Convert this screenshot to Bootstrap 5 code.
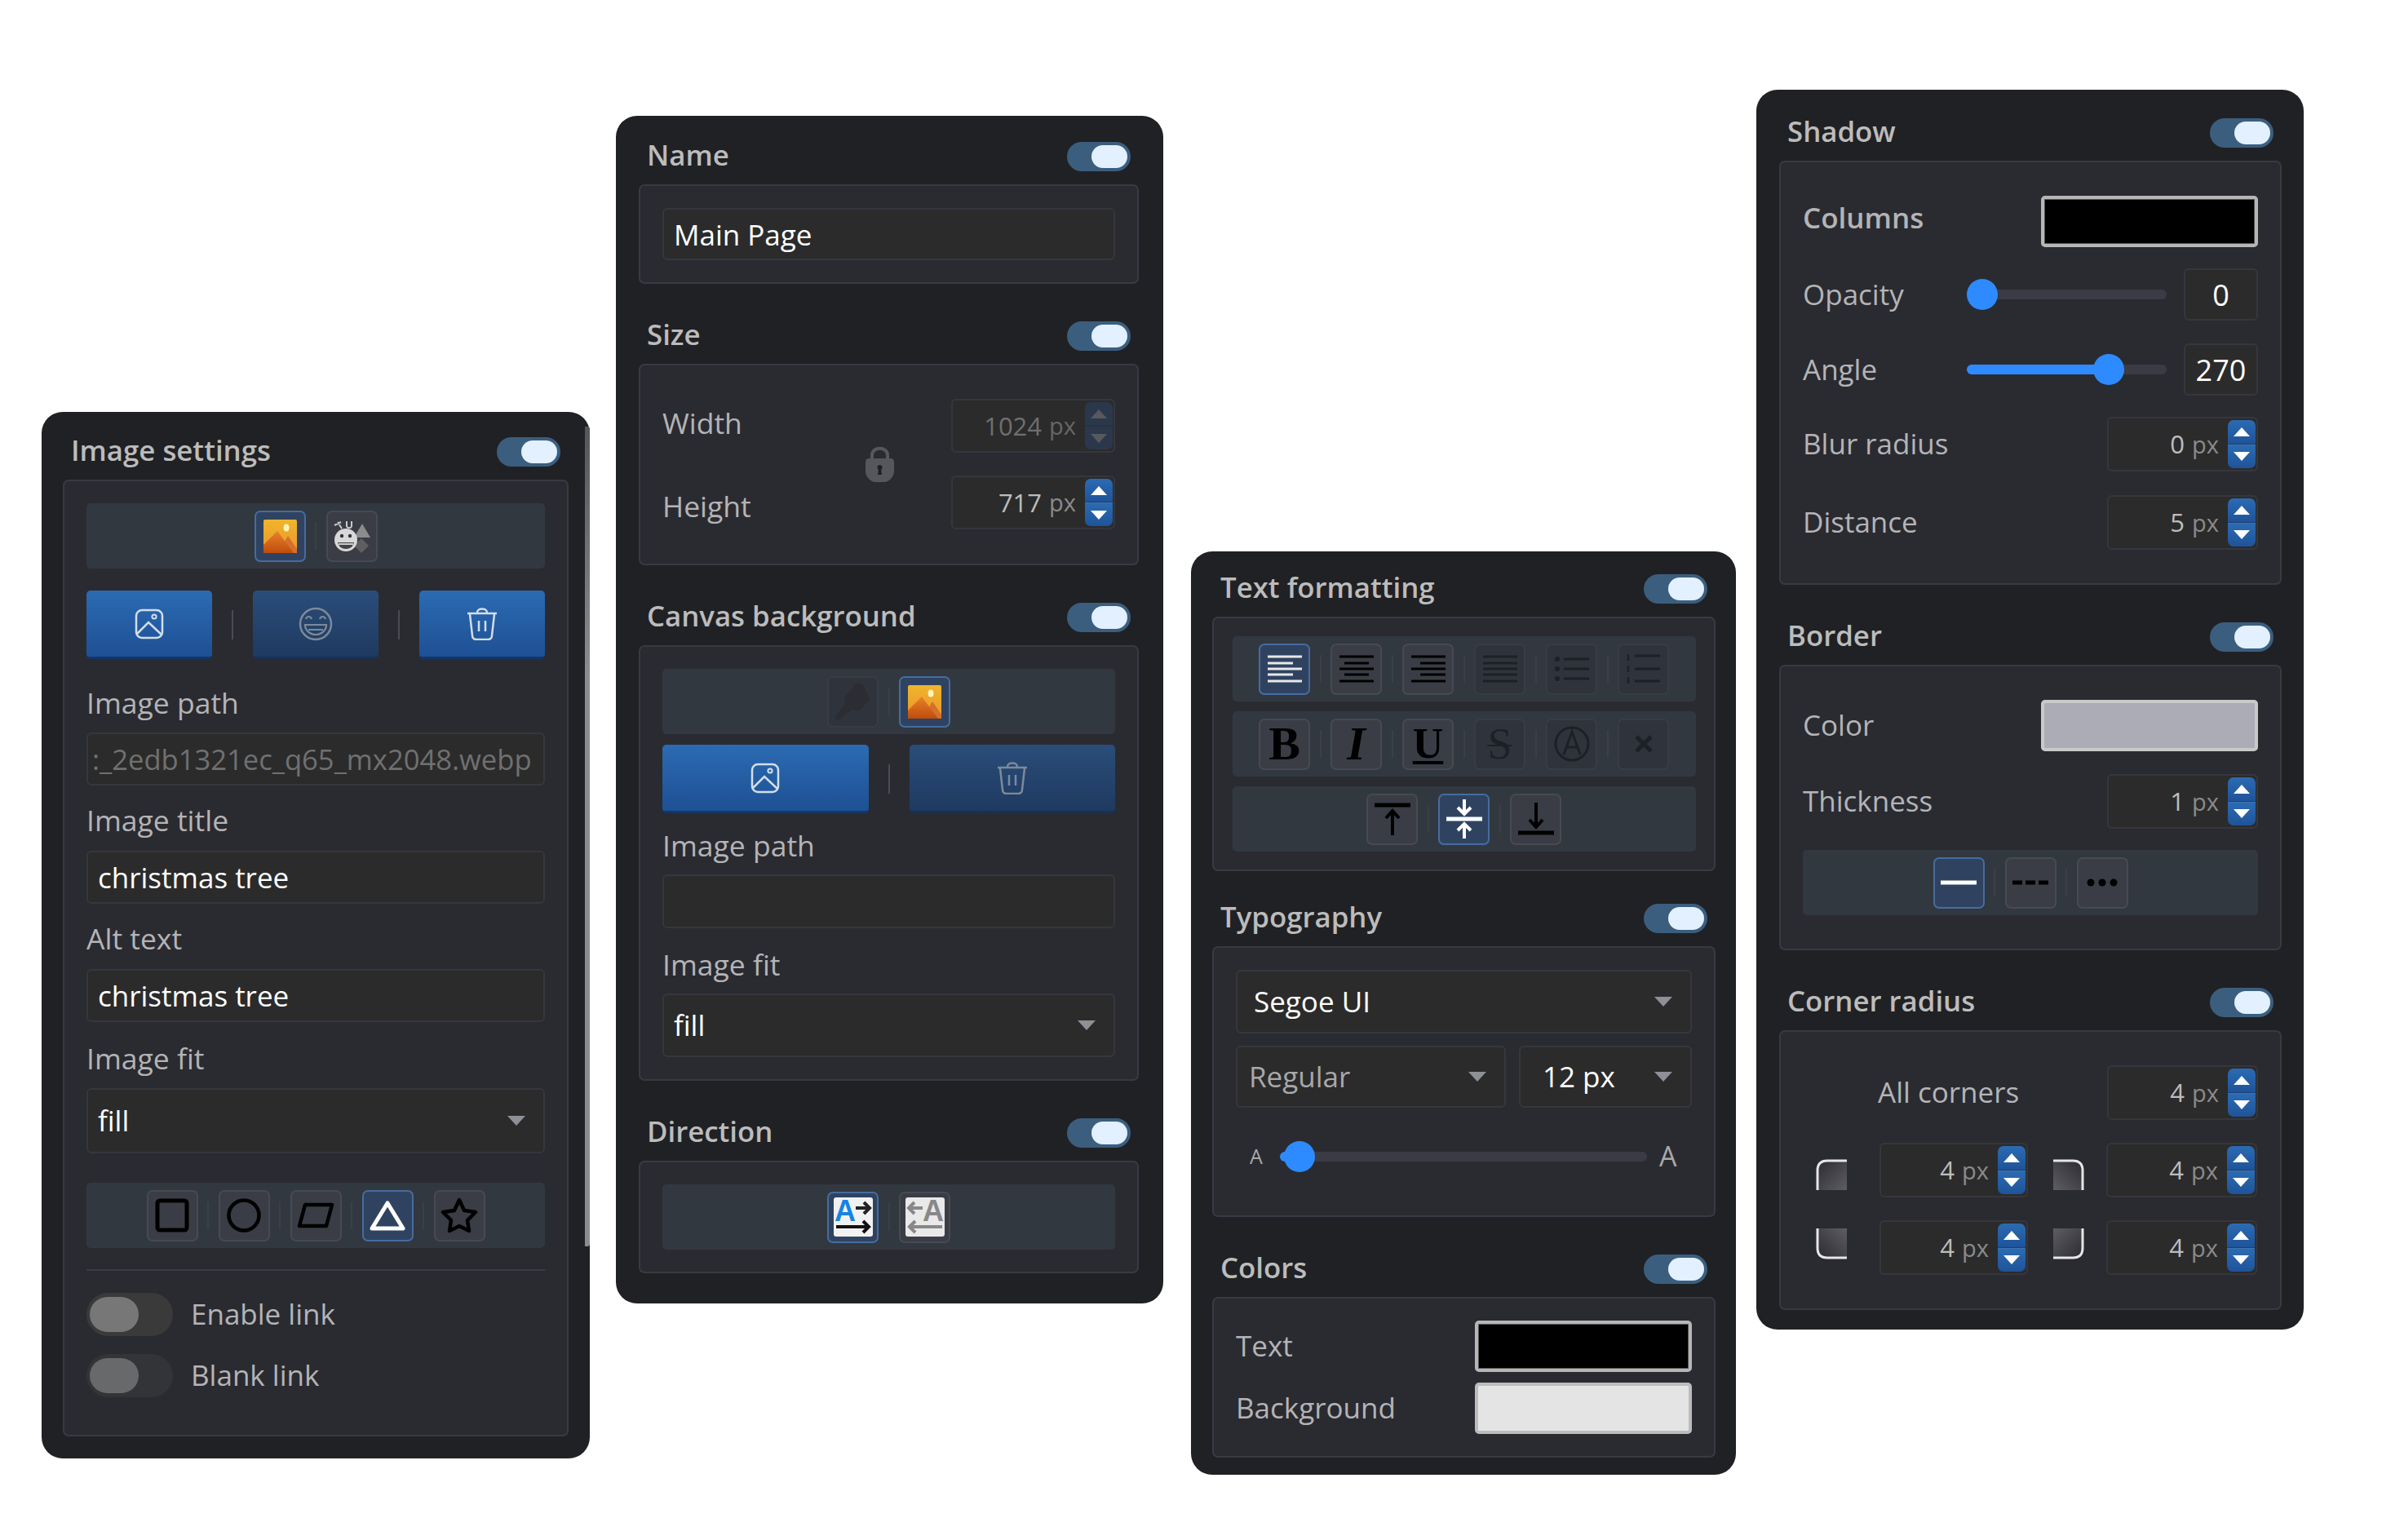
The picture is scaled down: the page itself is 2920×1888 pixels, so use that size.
<!DOCTYPE html>
<html lang="en">
<head>
    <meta charset="UTF-8">
    <title>Settings panels</title>
    <link href="https://cdn.jsdelivr.net/npm/bootstrap@5.3.0/dist/css/bootstrap.min.css" rel="stylesheet">
    <style>
        body { background: #fff; font-family: "Open Sans", "Liberation Sans", sans-serif; font-size: 35px; color: #b4b4b6; }
        .sprite { display: block; width: 0; height: 0; overflow: hidden; }
        .canvas { width: 2920px; height: 1888px; overflow: hidden; align-items: flex-start; }

        /* panels */
        .panel { background: #202124; border-radius: 26px; position: relative; flex: none; }
        .p1 { width: 672px; height: 1283px; margin: 505px 0 0 51px; padding: 31px 26px 0; }
        .p2 { width: 671px; height: 1456px; margin: 142px 0 0 32px; padding: 32px 30px 0 28px; }
        .p3 { width: 668px; height: 1132px; margin: 676px 0 0 34px; padding: 28px 25px 0 26px; }
        .p4 { width: 671px; height: 1520px; margin: 110px 0 0 25px; padding: 35px 27px 0 28px; }
        .scroll-thumb { position: absolute; top: 18px; right: 0; width: 6px; height: 1005px; border-radius: 0 3px 3px 0; background: linear-gradient(#55565a, #8b8c8f 30%, #8b8c8f); }

        .head { height: 36px; margin-bottom: 16px; padding: 0 10px; font-size: 34.8px; font-weight: 600; color: #bcbcbc; line-height: 36px; }
        .head > span:first-child { margin-top: -5px; }
        .box { background: #2a2b31; border: 2px solid #383a43; border-radius: 7px; padding: 27px; }
        .box-fmt { padding: 22px 22.5px; }
        .box-tall { padding-top: 41px; padding-bottom: 41px; }
        .sec { margin-top: 46px; }
        .sec-tight { margin-top: 40px; }
        .sep-line { border: 0; border-top: 2px solid #3a3c44; opacity: 1; margin-bottom: 0; }

        /* toggles */
        .toggle { width: 78px; height: 36px; border-radius: 18px; background: #3b5e7e; padding: 0 4px; }
        .toggle::after { content: ""; width: 44px; height: 28px; border-radius: 14px; background: #e3f0ff; }
        .switch-off { width: 106px; height: 53px; border-radius: 27px; background: #3a3a3b; padding: 0 4px; flex: none; }
        .switch-off::after { content: ""; width: 60px; height: 43px; border-radius: 22px; background: #777; }
        .switch-off.dim { background: #333437; }
        .switch-off.dim::after { background: #68696b; }
        .gap-22 { gap: 22px; }

        /* form controls */
        .form-control, .form-select { background-color: #2b2b2b; border: 2px solid #36373d; border-radius: 6px; color: #fff; font-size: 35px; padding: 0 12px; box-shadow: none; }
        .form-select { padding-right: 50px; background-position: right 22px center; background-size: 22px 12px; background-image: url("data:image/svg+xml,%3csvg xmlns='http://www.w3.org/2000/svg' viewBox='0 0 22 12'%3e%3cpath fill='%238d9096' d='M0 0h22L11 12z'/%3e%3c/svg%3e"); }
        .faded { color: #707070; font-size: 34.6px; padding-left: 5px; padding-right: 0; }
        .faded:disabled { background-color: #2b2b2b; color: #707070; }
        .sel-font { padding-left: 20px; }
        .sel-style { color: #a8a8a8; padding-left: 14px; min-width: 0; }
        .sel-size { width: 212px; flex: none; padding-left: 27px; }
        .lbl { line-height: 44px; font-size: 35.5px; }
        .lbl-fld { height: 44px; line-height: 40px; }
        .lbl-up { padding-bottom: 8px; }
        .lbl-down { padding-top: 8px; }
        .h64 { height: 64px; }
        .h65 { height: 65px; }
        .h66 { height: 66px; }
        .h67 { height: 67px; }
        .h76 { height: 76px; }
        .h78 { height: 78px; }
        .h80 { height: 80px; }

        /* flow offsets */
        .mt-12 { margin-top: 12px; }
        .mt-13 { margin-top: 13px; }
        .mt-14 { margin-top: 14px; }
        .mt-15 { margin-top: 15px; }
        .mt-19 { margin-top: 19px; }
        .mt-20 { margin-top: 20px; }
        .mt-22 { margin-top: 22px; }
        .mt-24 { margin-top: 24px; }
        .mt-26 { margin-top: 26px; }
        .mt-27 { margin-top: 27px; }
        .mt-28 { margin-top: 28px; }
        .mt-29 { margin-top: 29px; }
        .mt-33 { margin-top: 33px; }
        .mt-34 { margin-top: 34px; }
        .mt-36 { margin-top: 36px; }

        /* icon toolbars */
        .toolbar { height: 80px; background: #323840; border-radius: 5px; gap: 11.5px; }
        .tool { width: 63px; height: 63px; padding: 0; background: #3a3d45; border: 2px solid #474a53; border-radius: 7px; color: #000; line-height: 1; flex: none; }
        .tool:disabled { background: #2f333c; border-color: #383c45; opacity: 1; color: #1d2026; }
        .tool.on { background: #2f4361; border-color: #466c9f; color: #eee; }
        .tool svg { display: block; margin: auto; }
        .tool-sep { width: 2px; height: 34px; background: #3a3f48; }
        .glyph { font-family: "Liberation Serif", serif; font-size: 58px; font-weight: 700; }
        .glyph-i { font-style: italic; }
        .glyph-u { text-decoration: underline; text-decoration-thickness: 4px; text-underline-offset: 4px; font-size: 52px; }
        .glyph-s { text-decoration: line-through; text-decoration-thickness: 2px; font-weight: 400; font-size: 54px; }

        /* big buttons */
        .btn-blue { flex: 1 1 0; height: 84px; padding: 0; border: 0; border-bottom: 3px solid #14366b; border-radius: 5px; background: linear-gradient(#2b6bb2, #1e5094); color: #d3dde9; }
        .btn-blue:disabled { opacity: 1; border-bottom-color: #1a3054; background: linear-gradient(#2a4d7a, #1f3a60); color: #7d8a9a; }
        .btn-blue svg { display: block; margin: auto; }
        .btn-sep { width: 2px; height: 36px; background: #4a4c53; flex: none; }
        .btn-row { gap: 24px; }

        /* number fields */
        .spin { display: flex; align-items: center; justify-content: flex-end; gap: 9px; padding: 0 1px 0 0; font-size: 31px; color: #bdbdbd; }
        .spin .unit { color: #8a8a8a; font-size: 29px; margin-right: -2px; }
        .spin-btns { width: 34px; height: calc(100% - 4px); flex: none; margin-left: 4px; }
        .spin-btn { flex: 1; padding: 0; border: 0; background: linear-gradient(#2b6bb2, #1f5399); position: relative; }
        .spin-btn::after { content: ""; border-left: 10px solid transparent; border-right: 10px solid transparent; }
        .spin-up { border-radius: 7px 7px 0 0; border-bottom: 1px solid #1b3f74; }
        .spin-up::after { border-bottom: 11px solid #fff; }
        .spin-down { border-radius: 0 0 7px 7px; border-top: 1px solid #3d73b0; }
        .spin-down::after { border-top: 11px solid #fff; }
        .spin.off { color: #6f6f6f; }
        .spin.off .unit { color: #666; }
        .spin.off .spin-btn { background: #2b3f5e; }
        .spin.off .spin-up { border-bottom-color: #263750; }
        .spin.off .spin-down { border-top-color: #263750; }
        .spin.off .spin-up::after { border-bottom-color: #6f7278; }
        .spin.off .spin-down::after { border-top-color: #6f7278; }
        .w185 { width: 185px; }
        .w182 { width: 182px; }
        .w91 { width: 91px; flex: none; }
        .num-box { font-size: 36px; padding: 0; }

        .size-grid { display: grid; grid-template-columns: 1fr 35px 201px; column-gap: 70px; row-gap: 28px; align-items: center; margin-top: 14px; margin-bottom: 15px; }
        .lock { grid-column: 2; grid-row: 1 / span 2; }

        /* sliders */
        .form-range { height: 38px; display: block; min-width: 0; }
        .form-range::-webkit-slider-runnable-track { height: 12px; border-radius: 6px; background: linear-gradient(90deg, #2d8bff var(--fill), #3a3b45 var(--fill)); }
        .form-range::-webkit-slider-thumb { width: 38px; height: 38px; margin-top: -13px; border-radius: 50%; background: #2d8bff; box-shadow: none; }
        .form-range:focus::-webkit-slider-thumb { box-shadow: none; }

        /* colour swatches */
        .swatch { height: 63px; border-radius: 5px; border: 4px solid #b6b6b6; box-shadow: inset 0 0 0 1px #555; }
        .swatch-w { width: 266px; }
        .sw-light { background: #e4e4e4; border-color: #bcbcbc; box-shadow: none; }
        .sw-grey { background: #abacb5; border-color: #c9c9c9; box-shadow: none; }
        .a-sm { font-size: 25px; width: 54px; padding-left: 17px; color: #a9a9a9; flex: none; }
        .a-lg { font-size: 34px; width: 55px; padding-left: 15px; color: #a9a9a9; flex: none; }
        .num-lbl { width: 177px; flex: none; }
        .shadow-slider { width: 245px; flex: none; }
        .all-corners { margin-left: 92px; }
        .corner-icon { flex: none; margin: 0 40px 0 16px; }
        .corner-icon.second { margin: 0 27px 0 31px; }
        .corner-icon.top-row { margin-top: 10px; }
        .corner-icon.bottom-row { margin-bottom: 10px; }
    </style>
</head>
<body>
<!-- shared icons -->
<svg class="sprite" xmlns="http://www.w3.org/2000/svg">
    <defs>
        <linearGradient id="g-sky" x1="0" y1="0" x2="0" y2="1"><stop offset="0" stop-color="#f0b52b"/><stop offset="1" stop-color="#e8952b"/></linearGradient>
        <linearGradient id="g-hill" x1="0" y1="0" x2="0" y2="1"><stop offset="0" stop-color="#e8822b"/><stop offset="1" stop-color="#c04c0b"/></linearGradient>
        <linearGradient id="g-corner" x1="1" y1="1" x2="0" y2="0"><stop offset="0" stop-color="#5e5d63"/><stop offset="1" stop-color="#2b2b31"/></linearGradient>
    </defs>
    <symbol id="i-photo" viewBox="0 0 41 41">
        <rect width="41" height="41" rx="2" fill="url(#g-sky)"/>
        <ellipse cx="28" cy="10" rx="3.5" ry="4.5" fill="#fff3bb"/>
        <path d="M30 20l11 16v5H18z" fill="#d56f2c"/>
        <path d="M17 14L37 41H0V31z" fill="url(#g-hill)"/>
    </symbol>
    <symbol id="i-faces" viewBox="0 0 46 42">
        <path d="M36 6l10 17H26z" fill="#8c8c8c"/>
        <path d="M35 24l9 9-9 9-9-9z" fill="#5f5f5f"/>
        <circle cx="16" cy="26" r="14" fill="#d8d8d8"/>
        <circle cx="11" cy="21" r="2.2" fill="#333"/><circle cx="21" cy="21" r="2.2" fill="#333"/>
        <path d="M6 29h20c-1 5-5 8-10 8s-9-3-10-8z" fill="#444"/>
        <path d="M7 30h18v2H7z" fill="#ccc"/>
        <path d="M2 8l8-4M6 4l5 8M17 3v6c1 3 5 3 6 0V3" fill="none" stroke="#c8c8c8" stroke-width="2"/>
    </symbol>
    <symbol id="i-image" viewBox="0 0 36 38">
        <rect x="2" y="2" width="32" height="34" rx="7" fill="none" stroke="currentColor" stroke-width="2.5"/>
        <circle cx="24" cy="10" r="2.6" fill="none" stroke="currentColor" stroke-width="2"/>
        <path d="M3 31l14-14 16 15" fill="none" stroke="currentColor" stroke-width="2.5"/>
    </symbol>
    <symbol id="i-smile" viewBox="0 0 42 42">
        <circle cx="21" cy="21" r="19" fill="none" stroke="currentColor" stroke-width="2.5"/>
        <path d="M9 15c1-4 6-4 7 0M26 15c1-4 6-4 7 0" fill="none" stroke="currentColor" stroke-width="2.2"/>
        <path d="M8 22h26c0 7-6 12-13 12S8 29 8 22zM12 28h18" fill="none" stroke="currentColor" stroke-width="2.2"/>
    </symbol>
    <symbol id="i-trash" viewBox="0 0 38 40">
        <path d="M1 7h36M13 6c0-6 12-6 12 0M4 8l3 26c0 3 2 5 5 5h14c3 0 5-2 5-5l3-26" fill="none" stroke="currentColor" stroke-width="2.5"/>
        <path d="M15 16v13M23 16v13" fill="none" stroke="currentColor" stroke-width="2.5"/>
    </symbol>
</svg>

<div class="canvas d-flex">

    <!-- image settings -->
    <div class="panel p1">
        <div class="scroll-thumb"></div>
        <div class="head d-flex justify-content-between align-items-center"><span>Image settings</span><span class="toggle d-flex justify-content-end align-items-center"></span></div>
        <div class="box">
            <div class="toolbar d-flex justify-content-center align-items-center">
                <button class="btn tool on"><svg width="41" height="41"><use href="#i-photo"/></svg></button>
                <div class="tool-sep"></div>
                <button class="btn tool"><svg width="46" height="42"><use href="#i-faces"/></svg></button>
            </div>
            <div class="d-flex btn-row align-items-center mt-27">
                <button class="btn btn-blue"><svg width="36" height="38"><use href="#i-image"/></svg></button>
                <div class="btn-sep"></div>
                <button class="btn btn-blue" disabled><svg width="42" height="42"><use href="#i-smile"/></svg></button>
                <div class="btn-sep"></div>
                <button class="btn btn-blue"><svg width="38" height="40"><use href="#i-trash"/></svg></button>
            </div>
            <div class="lbl lbl-fld mt-33">Image path</div>
            <input class="form-control faded h65 mt-13" value=":_2edb1321ec_q65_mx2048.webp" disabled>
            <div class="lbl lbl-fld mt-22">Image title</div>
            <input class="form-control h65 mt-14" value="christmas tree">
            <div class="lbl lbl-fld mt-22">Alt text</div>
            <input class="form-control h65 mt-14" value="christmas tree">
            <div class="lbl lbl-fld mt-24">Image fit</div>
            <select class="form-select h80 mt-13"><option>fill</option></select>
            <div class="toolbar d-flex justify-content-center align-items-center mt-36">
                <button class="btn tool"><svg width="42" height="42" viewBox="0 0 42 42"><rect x="3" y="3" width="36" height="36" rx="3" fill="none" stroke="#000" stroke-width="5"/></svg></button>
                <div class="tool-sep"></div>
                <button class="btn tool"><svg width="42" height="42" viewBox="0 0 42 42"><circle cx="21" cy="21" r="18.5" fill="none" stroke="#000" stroke-width="4.5"/></svg></button>
                <div class="tool-sep"></div>
                <button class="btn tool"><svg width="46" height="32" viewBox="0 0 46 32"><path d="M10 3h33l-7 26H3z" fill="none" stroke="#000" stroke-width="4.5" stroke-linejoin="round"/></svg></button>
                <div class="tool-sep"></div>
                <button class="btn tool on"><svg width="44" height="38" viewBox="0 0 44 38"><path d="M22 4l19 31H3z" fill="none" stroke="#fff" stroke-width="5" stroke-linejoin="round"/></svg></button>
                <div class="tool-sep"></div>
                <button class="btn tool"><svg width="46" height="44" viewBox="0 0 46 44"><path d="M23 3l6 13 14 2-10 10 2 13-12-6-12 6 2-13L3 18l14-2z" fill="none" stroke="#000" stroke-width="4.5" stroke-linejoin="round"/></svg></button>
            </div>
            <hr class="sep-line mt-26">
            <div class="d-flex align-items-center mt-27 gap-22"><span class="switch-off d-flex align-items-center"></span><span>Enable link</span></div>
            <div class="d-flex align-items-center mt-22 gap-22"><span class="switch-off dim d-flex align-items-center"></span><span>Blank link</span></div>
            <div class="mt-19"></div>
        </div>
    </div>

    <!-- page settings -->
    <div class="panel p2">
        <div class="head d-flex justify-content-between align-items-center"><span>Name</span><span class="toggle d-flex justify-content-end align-items-center"></span></div>
        <div class="box"><input class="form-control h64" value="Main Page"></div>

        <div class="head d-flex justify-content-between align-items-center sec"><span>Size</span><span class="toggle d-flex justify-content-end align-items-center"></span></div>
        <div class="box">
            <div class="size-grid">
                <span class="lbl lbl-up">Width</span>
                <svg class="lock" width="35" height="44" viewBox="0 0 35 44"><path d="M8 17V11C8 0 27 0 27 11v6" fill="none" stroke="#55575c" stroke-width="4"/><path d="M4 15h27c2 0 4 2 4 4v12c0 6-6 13-12 13H12C6 44 0 37 0 31V19c0-2 2-4 4-4z" fill="#55575c"/><circle cx="17.5" cy="26" r="3" fill="#202124"/><path d="M16 27h3l1 8h-5z" fill="#202124"/></svg>
                <div class="form-control spin off h66"><span>1024</span><span class="unit">px</span><div class="spin-btns d-flex flex-column"><button class="btn spin-btn spin-up d-flex align-items-center justify-content-center" disabled></button><button class="btn spin-btn spin-down d-flex align-items-center justify-content-center" disabled></button></div></div>
                <span class="lbl lbl-down">Height</span>
                <div class="form-control spin h66"><span>717</span><span class="unit">px</span><div class="spin-btns d-flex flex-column"><button class="btn spin-btn spin-up d-flex align-items-center justify-content-center"></button><button class="btn spin-btn spin-down d-flex align-items-center justify-content-center"></button></div></div>
            </div>
        </div>

        <div class="head d-flex justify-content-between align-items-center sec"><span>Canvas background</span><span class="toggle d-flex justify-content-end align-items-center"></span></div>
        <div class="box">
            <div class="toolbar d-flex justify-content-center align-items-center">
                <button class="btn tool" disabled><svg width="59" height="59" viewBox="0 0 63 63"><path d="M35 8h9l10 20-14 15-10-2-18 15-4-4 14-20-2-5z" fill="#2b2d33"/></svg></button>
                <div class="tool-sep"></div>
                <button class="btn tool on"><svg width="41" height="41"><use href="#i-photo"/></svg></button>
            </div>
            <div class="d-flex btn-row align-items-center mt-13">
                <button class="btn btn-blue"><svg width="36" height="38"><use href="#i-image"/></svg></button>
                <div class="btn-sep"></div>
                <button class="btn btn-blue" disabled><svg width="38" height="40"><use href="#i-trash"/></svg></button>
            </div>
            <div class="lbl lbl-fld mt-19">Image path</div>
            <input class="form-control h66 mt-12" value="">
            <div class="lbl lbl-fld mt-24">Image fit</div>
            <select class="form-select mt-12 h78"><option>fill</option></select>
        </div>

        <div class="head d-flex justify-content-between align-items-center sec"><span>Direction</span><span class="toggle d-flex justify-content-end align-items-center"></span></div>
        <div class="box">
            <div class="toolbar d-flex justify-content-center align-items-center">
                <button class="btn tool on"><svg width="48" height="58" viewBox="0 -5 48 58"><rect width="48" height="48" rx="3" fill="#f1f1f1"/><text x="1" y="29" font-family="Liberation Sans, sans-serif" font-size="36" font-weight="700" fill="#1583e6">A</text><path d="M27 13h16M37 6l7 7-7 7" fill="none" stroke="#222" stroke-width="4"/><path d="M3 36h39M36 29l7 7-7 7" fill="none" stroke="#111" stroke-width="4"/></svg></button>
                <div class="tool-sep"></div>
                <button class="btn tool"><svg width="48" height="58" viewBox="0 -5 48 58"><rect width="48" height="48" rx="3" fill="#e9e9e9"/><text x="21" y="29" font-family="Liberation Sans, sans-serif" font-size="36" font-weight="700" fill="#888">A</text><path d="M21 13H5M11 6l-7 7 7 7" fill="none" stroke="#888" stroke-width="4"/><path d="M45 36H6M12 29l-7 7 7 7" fill="none" stroke="#888" stroke-width="4"/></svg></button>
            </div>
        </div>
    </div>

    <!-- text settings -->
    <div class="panel p3">
        <div class="head d-flex justify-content-between align-items-center"><span>Text formatting</span><span class="toggle d-flex justify-content-end align-items-center"></span></div>
        <div class="box box-fmt">
            <div class="toolbar d-flex justify-content-center align-items-center">
                <button class="btn tool on"><svg width="42" height="34" viewBox="0 0 42 34"><path d="M0 2h42M0 10h31M0 17h42M0 24h31M0 32h42" stroke="#e8e8e8" stroke-width="3"/></svg></button>
                <div class="tool-sep"></div>
                <button class="btn tool"><svg width="42" height="34" viewBox="0 0 42 34"><path d="M0 2h42M6 10h30M0 17h42M6 24h30M0 32h42" stroke="#000" stroke-width="3"/></svg></button>
                <div class="tool-sep"></div>
                <button class="btn tool"><svg width="42" height="34" viewBox="0 0 42 34"><path d="M0 2h42M11 10h31M0 17h42M11 24h31M0 32h42" stroke="#000" stroke-width="3"/></svg></button>
                <div class="tool-sep"></div>
                <button class="btn tool" disabled><svg width="42" height="34" viewBox="0 0 42 34"><path d="M0 2h42M0 10h42M0 17h42M0 24h42M0 32h42" stroke="#1d2026" stroke-width="3"/></svg></button>
                <div class="tool-sep"></div>
                <button class="btn tool" disabled><svg width="42" height="34" viewBox="0 0 42 34"><path d="M11 5h31M11 17h31M11 29h31" stroke="#1d2026" stroke-width="3"/><circle cx="3" cy="5" r="3" fill="#1d2026"/><circle cx="3" cy="17" r="3" fill="#1d2026"/><circle cx="3" cy="29" r="3" fill="#1d2026"/></svg></button>
                <div class="tool-sep"></div>
                <button class="btn tool" disabled><svg width="42" height="38" viewBox="0 0 42 38"><path d="M10 3h31M10 19h31M10 34h31" stroke="#1d2026" stroke-width="3"/><path d="M2 1v8M2 15v8M2 29v8" stroke="#1d2026" stroke-width="2.5"/></svg></button>
            </div>
            <div class="toolbar d-flex justify-content-center align-items-center mt-12">
                <button class="btn tool glyph">B</button>
                <div class="tool-sep"></div>
                <button class="btn tool glyph glyph-i">I</button>
                <div class="tool-sep"></div>
                <button class="btn tool glyph glyph-u">U</button>
                <div class="tool-sep"></div>
                <button class="btn tool glyph glyph-s" disabled>S</button>
                <div class="tool-sep"></div>
                <button class="btn tool" disabled><svg width="46" height="46" viewBox="0 0 46 46"><circle cx="23" cy="23" r="20" fill="none" stroke="#1d2026" stroke-width="3"/><path d="M13 36L23 8l10 28M17 27h12" fill="none" stroke="#1d2026" stroke-width="3"/></svg></button>
                <div class="tool-sep"></div>
                <button class="btn tool" disabled><svg width="22" height="22" viewBox="0 0 22 22"><path d="M2 2l18 18M20 2L2 20" stroke="#1d2026" stroke-width="5"/></svg></button>
            </div>
            <div class="toolbar d-flex justify-content-center align-items-center mt-12">
                <button class="btn tool"><svg width="44" height="40" viewBox="0 0 44 40"><path d="M0 3h44" stroke="#000" stroke-width="5"/><path d="M22 40V11M14 19l8-9 8 9" fill="none" stroke="#000" stroke-width="4"/></svg></button>
                <div class="tool-sep"></div>
                <button class="btn tool on"><svg width="44" height="48" viewBox="0 0 44 48"><path d="M0 24h44" stroke="#fff" stroke-width="5"/><path d="M22 0v18M14 10l8 8 8-8M22 48V30M14 38l8-8 8 8" fill="none" stroke="#fff" stroke-width="4"/></svg></button>
                <div class="tool-sep"></div>
                <button class="btn tool"><svg width="44" height="40" viewBox="0 0 44 40"><path d="M0 37h44" stroke="#000" stroke-width="5"/><path d="M22 0v29M14 21l8 9 8-9" fill="none" stroke="#000" stroke-width="4"/></svg></button>
            </div>
        </div>

        <div class="head d-flex justify-content-between align-items-center sec-tight"><span>Typography</span><span class="toggle d-flex justify-content-end align-items-center"></span></div>
        <div class="box">
            <select class="form-select sel-font h78"><option>Segoe UI</option></select>
            <div class="d-flex mt-15 gap-3">
                <select class="form-select sel-style h76"><option>Regular</option></select>
                <select class="form-select sel-size h76"><option>12 px</option></select>
            </div>
            <div class="d-flex align-items-center mt-34">
                <span class="a-sm">A</span>
                <input type="range" class="form-range flex-fill" min="0" max="100" step="0.1" value="1.2" style="--fill: 3%">
                <span class="a-lg">A</span>
            </div>
            <div class="mt-20"></div>
        </div>

        <div class="head d-flex justify-content-between align-items-center sec"><span>Colors</span><span class="toggle d-flex justify-content-end align-items-center"></span></div>
        <div class="box">
            <div class="d-flex justify-content-between align-items-center"><span>Text</span><div class="swatch swatch-w bg-black"></div></div>
            <div class="d-flex justify-content-between align-items-center mt-13"><span>Background</span><div class="swatch swatch-w sw-light"></div></div>
        </div>
    </div>

    <!-- shape settings -->
    <div class="panel p4">
        <div class="head d-flex justify-content-between align-items-center"><span>Shadow</span><span class="toggle d-flex justify-content-end align-items-center"></span></div>
        <div class="box box-tall">
            <div class="d-flex justify-content-between align-items-center"><span class="fw-semibold lbl-up">Columns</span><div class="swatch swatch-w bg-black"></div></div>
            <div class="d-flex align-items-center mt-26"><span class="num-lbl me-4">Opacity</span><input type="range" class="form-range shadow-slider" min="0" max="360" value="0" style="--fill: 0%"><input class="form-control h64 w91 ms-auto text-center num-box" value="0"></div>
            <div class="d-flex align-items-center mt-28"><span class="num-lbl me-4">Angle</span><input type="range" class="form-range shadow-slider" min="0" max="360" value="270" style="--fill: 75%"><input class="form-control h64 w91 ms-auto text-center num-box" value="270"></div>
            <div class="d-flex justify-content-between align-items-center mt-26"><span>Blur radius</span><div class="form-control spin w185 h67"><span>0</span><span class="unit">px</span><div class="spin-btns d-flex flex-column"><button class="btn spin-btn spin-up d-flex align-items-center justify-content-center"></button><button class="btn spin-btn spin-down d-flex align-items-center justify-content-center"></button></div></div></div>
            <div class="d-flex justify-content-between align-items-center mt-29"><span>Distance</span><div class="form-control spin w185 h67"><span>5</span><span class="unit">px</span><div class="spin-btns d-flex flex-column"><button class="btn spin-btn spin-up d-flex align-items-center justify-content-center"></button><button class="btn spin-btn spin-down d-flex align-items-center justify-content-center"></button></div></div></div>
        </div>

        <div class="head d-flex justify-content-between align-items-center sec"><span>Border</span><span class="toggle d-flex justify-content-end align-items-center"></span></div>
        <div class="box box-tall">
            <div class="d-flex justify-content-between align-items-center"><span>Color</span><div class="swatch swatch-w sw-grey"></div></div>
            <div class="d-flex justify-content-between align-items-center mt-28"><span>Thickness</span><div class="form-control spin w185 h67"><span>1</span><span class="unit">px</span><div class="spin-btns d-flex flex-column"><button class="btn spin-btn spin-up d-flex align-items-center justify-content-center"></button><button class="btn spin-btn spin-down d-flex align-items-center justify-content-center"></button></div></div></div>
            <div class="toolbar d-flex justify-content-center align-items-center mt-26">
                <button class="btn tool on"><svg width="44" height="8" viewBox="0 0 44 8"><path d="M0 4h44" stroke="#fff" stroke-width="5"/></svg></button>
                <div class="tool-sep"></div>
                <button class="btn tool"><svg width="44" height="8" viewBox="0 0 44 8"><path d="M0 4h44" stroke="#000" stroke-width="5" stroke-dasharray="12 4"/></svg></button>
                <div class="tool-sep"></div>
                <button class="btn tool"><svg width="38" height="10" viewBox="0 0 38 10"><circle cx="5" cy="5" r="4.5"/><circle cx="19" cy="5" r="4.5"/><circle cx="33" cy="5" r="4.5"/></svg></button>
            </div>
        </div>

        <div class="head d-flex justify-content-between align-items-center sec"><span>Corner radius</span><span class="toggle d-flex justify-content-end align-items-center"></span></div>
        <div class="box box-tall">
            <div class="d-flex justify-content-between align-items-center"><span class="all-corners">All corners</span><div class="form-control spin w185 h67"><span>4</span><span class="unit">px</span><div class="spin-btns d-flex flex-column"><button class="btn spin-btn spin-up d-flex align-items-center justify-content-center"></button><button class="btn spin-btn spin-down d-flex align-items-center justify-content-center"></button></div></div></div>
            <div class="d-flex align-items-center mt-28">
                <svg class="corner-icon top-row" width="38" height="38" viewBox="0 0 38 38"><path d="M38 2H14Q2 2 2 14V38H38z" fill="url(#g-corner)"/><path d="M38 2H14Q2 2 2 14V38" fill="none" stroke="#e6e6e6" stroke-width="3"/></svg>
                <div class="form-control spin w182 h67"><span>4</span><span class="unit">px</span><div class="spin-btns d-flex flex-column"><button class="btn spin-btn spin-up d-flex align-items-center justify-content-center"></button><button class="btn spin-btn spin-down d-flex align-items-center justify-content-center"></button></div></div>
                <svg class="corner-icon second top-row" width="38" height="38" viewBox="0 0 38 38"><g transform="matrix(-1 0 0 1 38 0)"><path d="M38 2H14Q2 2 2 14V38H38z" fill="url(#g-corner)"/><path d="M38 2H14Q2 2 2 14V38" fill="none" stroke="#e6e6e6" stroke-width="3"/></g></svg>
                <div class="form-control spin w185 h67"><span>4</span><span class="unit">px</span><div class="spin-btns d-flex flex-column"><button class="btn spin-btn spin-up d-flex align-items-center justify-content-center"></button><button class="btn spin-btn spin-down d-flex align-items-center justify-content-center"></button></div></div>
            </div>
            <div class="d-flex align-items-center mt-28">
                <svg class="corner-icon bottom-row" width="38" height="38" viewBox="0 0 38 38"><g transform="matrix(1 0 0 -1 0 38)"><path d="M38 2H14Q2 2 2 14V38H38z" fill="url(#g-corner)"/><path d="M38 2H14Q2 2 2 14V38" fill="none" stroke="#e6e6e6" stroke-width="3"/></g></svg>
                <div class="form-control spin w182 h67"><span>4</span><span class="unit">px</span><div class="spin-btns d-flex flex-column"><button class="btn spin-btn spin-up d-flex align-items-center justify-content-center"></button><button class="btn spin-btn spin-down d-flex align-items-center justify-content-center"></button></div></div>
                <svg class="corner-icon second bottom-row" width="38" height="38" viewBox="0 0 38 38"><g transform="matrix(-1 0 0 -1 38 38)"><path d="M38 2H14Q2 2 2 14V38H38z" fill="url(#g-corner)"/><path d="M38 2H14Q2 2 2 14V38" fill="none" stroke="#e6e6e6" stroke-width="3"/></g></svg>
                <div class="form-control spin w185 h67"><span>4</span><span class="unit">px</span><div class="spin-btns d-flex flex-column"><button class="btn spin-btn spin-up d-flex align-items-center justify-content-center"></button><button class="btn spin-btn spin-down d-flex align-items-center justify-content-center"></button></div></div>
            </div>
        </div>
    </div>
</div>
<script src="https://cdn.jsdelivr.net/npm/bootstrap@5.3.0/dist/js/bootstrap.bundle.min.js"></script>
</body>
</html>
